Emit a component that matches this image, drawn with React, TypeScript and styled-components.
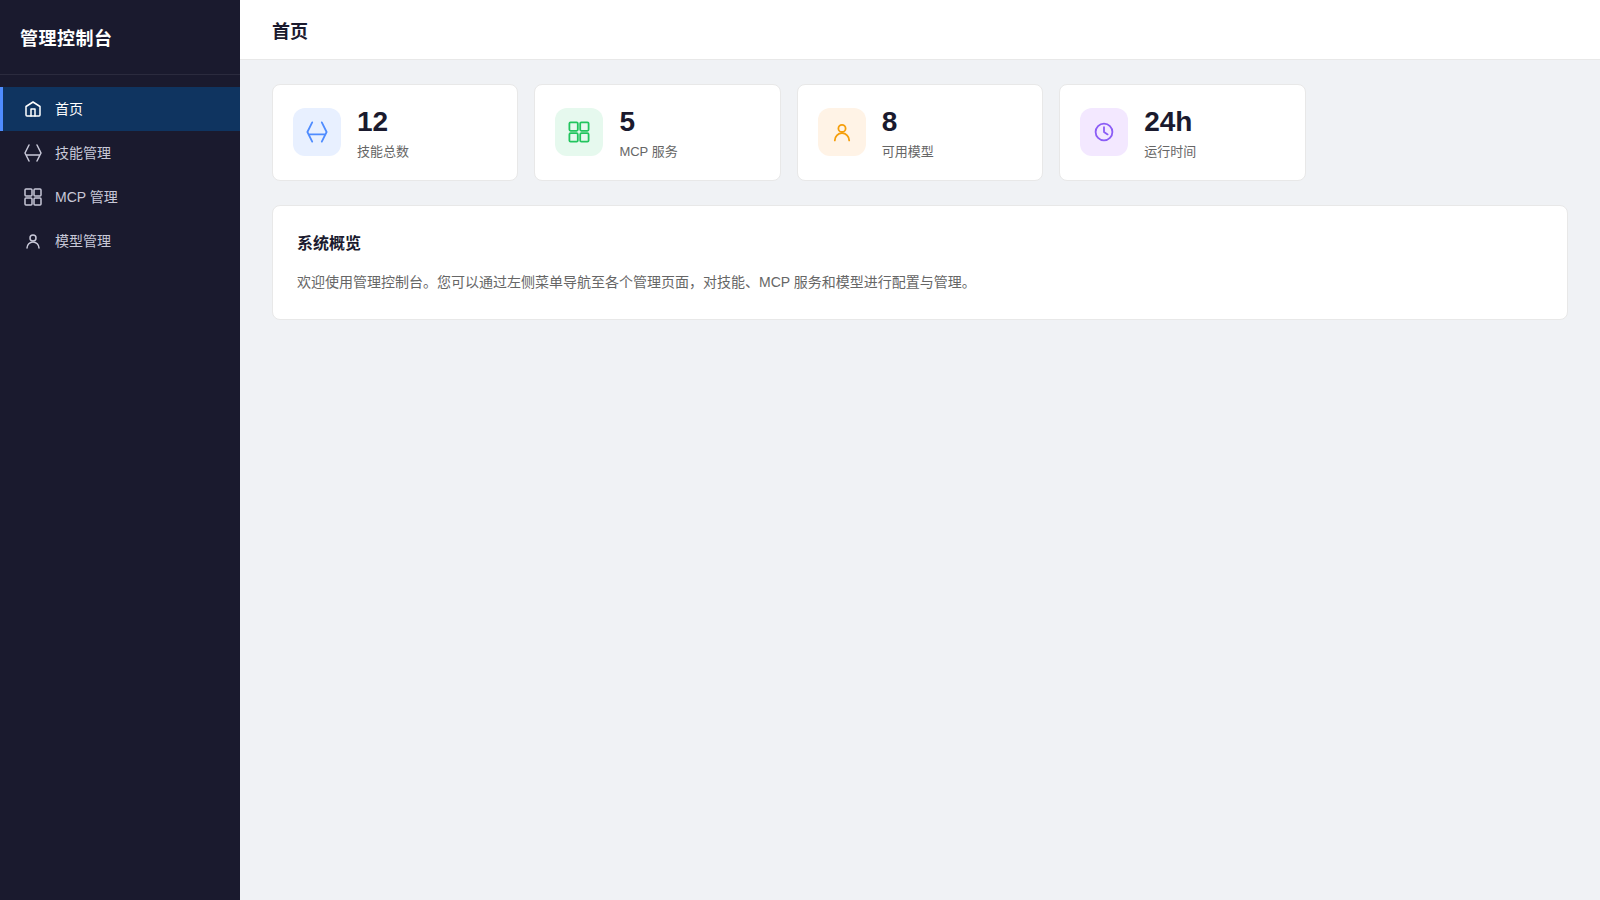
import React from 'react';
import styled, { createGlobalStyle } from 'styled-components';

const GlobalStyle = createGlobalStyle`
  * { margin: 0; padding: 0; box-sizing: border-box; }
  body {
    font-family: 'Liberation Sans', 'Noto Sans CJK SC', sans-serif;
    background: #f0f2f5;
    color: #1a1a2e;
  }
`;

const Layout = styled.div`
  display: flex;
  min-height: 100vh;
`;

const Sidebar = styled.aside`
  width: 240px;
  flex-shrink: 0;
  background: #1a1a2e;
`;

const Brand = styled.div`
  padding: 24px 20px;
  border-bottom: 1px solid rgba(255, 255, 255, 0.08);
  color: #fff;
  font-size: 18px;
  font-weight: 700;
  letter-spacing: 0.5px;
`;

const Nav = styled.nav`
  display: flex;
  flex-direction: column;
  padding: 12px 0;
`;

const NavItem = styled.a<{ $active?: boolean }>`
  display: flex;
  align-items: center;
  gap: 12px;
  padding: 12px 20px;
  border-left: 3px solid ${(p) => (p.$active ? '#4f8cff' : 'transparent')};
  background: ${(p) => (p.$active ? '#0f3460' : 'transparent')};
  color: ${(p) => (p.$active ? '#fff' : '#c8c8d8')};
  font-size: 14px;
  line-height: 20px;
  cursor: pointer;

  svg {
    flex-shrink: 0;
  }
`;

const Main = styled.div`
  flex: 1;
  display: flex;
  flex-direction: column;
  min-width: 0;
`;

const Header = styled.header`
  display: flex;
  align-items: center;
  height: 60px;
  padding: 0 32px;
  background: #fff;
  border-bottom: 1px solid #e8e8e8;
`;

const PageTitle = styled.h1`
  font-size: 18px;
  font-weight: 600;
`;

const Content = styled.main`
  display: flex;
  flex-direction: column;
  gap: 24px;
  padding: 24px 32px;
`;

const Stats = styled.div`
  display: grid;
  grid-template-columns: repeat(auto-fill, minmax(220px, 1fr));
  gap: 16px;
`;

const Card = styled.section`
  background: #fff;
  border: 1px solid #e8e8e8;
  border-radius: 8px;
`;

const StatCard = styled(Card)`
  display: flex;
  align-items: center;
  gap: 16px;
  padding: 20px;
`;

const StatIcon = styled.div<{ $bg: string; $fg: string }>`
  display: flex;
  align-items: center;
  justify-content: center;
  width: 48px;
  height: 48px;
  border-radius: 12px;
  background: ${(p) => p.$bg};
  color: ${(p) => p.$fg};
`;

const StatValue = styled.div`
  font-size: 28px;
  font-weight: 700;
  line-height: 1.2;
`;

const StatLabel = styled.div`
  margin-top: 2px;
  color: #666;
  font-size: 13px;
`;

const Overview = styled(Card)`
  padding: 24px;
`;

const OverviewTitle = styled.h2`
  margin-bottom: 16px;
  font-size: 16px;
  font-weight: 600;
`;

const OverviewText = styled.p`
  color: #666;
  font-size: 14px;
  line-height: 1.8;
`;

type IconName = 'home' | 'skill' | 'grid' | 'user' | 'clock';

const shapes: Record<IconName, React.ReactNode> = {
  home: (
    <>
      <path d="M3 7.5L10 3l7 4.5V16a1 1 0 0 1-1 1H4a1 1 0 0 1-1-1V7.5z" />
      <path d="M8 17v-7h4v7" />
    </>
  ),
  skill: <path d="M6 2L2 10l4 8M14 2l4 8-4 8M3 12h14" />,
  grid: (
    <>
      <rect x="2" y="2" width="7" height="7" rx="1" />
      <rect x="11" y="2" width="7" height="7" rx="1" />
      <rect x="2" y="11" width="7" height="7" rx="1" />
      <rect x="11" y="11" width="7" height="7" rx="1" />
    </>
  ),
  user: (
    <>
      <circle cx="10" cy="7" r="3" />
      <path d="M4 17a6 6 0 0 1 12 0" />
    </>
  ),
  clock: (
    <>
      <circle cx="10" cy="10" r="7" />
      <path d="M10 6v4l3 2" />
    </>
  ),
};

const Icon = ({ name, size }: { name: IconName; size: number }) => (
  <svg
    width={size}
    height={size}
    viewBox="0 0 20 20"
    fill="none"
    stroke="currentColor"
    strokeWidth="1.5"
    strokeLinecap="round"
    strokeLinejoin="round"
  >
    {shapes[name]}
  </svg>
);

const navItems: { icon: IconName; label: string }[] = [
  { icon: 'home', label: '首页' },
  { icon: 'skill', label: '技能管理' },
  { icon: 'grid', label: 'MCP 管理' },
  { icon: 'user', label: '模型管理' },
];

const stats: { icon: IconName; value: string; label: string; bg: string; fg: string }[] = [
  { icon: 'skill', value: '12', label: '技能总数', bg: '#e8f0ff', fg: '#4f8cff' },
  { icon: 'grid', value: '5', label: 'MCP 服务', bg: '#e6f9ee', fg: '#22c55e' },
  { icon: 'user', value: '8', label: '可用模型', bg: '#fff3e6', fg: '#f59e0b' },
  { icon: 'clock', value: '24h', label: '运行时间', bg: '#f3e8ff', fg: '#8b5cf6' },
];

export default function App() {
  return (
    <Layout>
      <GlobalStyle />
      <Sidebar>
        <Brand>管理控制台</Brand>
        <Nav>
          {navItems.map((item, i) => (
            <NavItem key={item.label} $active={i === 0}>
              <Icon name={item.icon} size={20} />
              {item.label}
            </NavItem>
          ))}
        </Nav>
      </Sidebar>
      <Main>
        <Header>
          <PageTitle>首页</PageTitle>
        </Header>
        <Content>
          <Stats>
            {stats.map((s) => (
              <StatCard key={s.label}>
                <StatIcon $bg={s.bg} $fg={s.fg}>
                  <Icon name={s.icon} size={24} />
                </StatIcon>
                <div>
                  <StatValue>{s.value}</StatValue>
                  <StatLabel>{s.label}</StatLabel>
                </div>
              </StatCard>
            ))}
          </Stats>
          <Overview>
            <OverviewTitle>系统概览</OverviewTitle>
            <OverviewText>
              欢迎使用管理控制台。您可以通过左侧菜单导航至各个管理页面，对技能、MCP 服务和模型进行配置与管理。
            </OverviewText>
          </Overview>
        </Content>
      </Main>
    </Layout>
  );
}
